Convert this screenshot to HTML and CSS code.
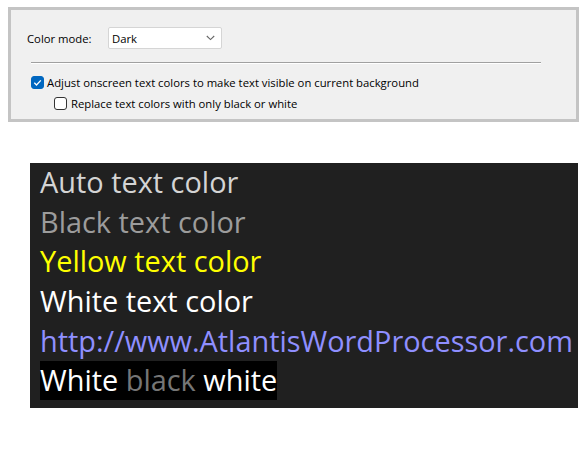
FILE: index.html
```html
<!DOCTYPE html>
<html>
<head>
<meta charset="utf-8">
<link rel="stylesheet" href="styles.css">
</head>
<body>
<div class="page">
  <div class="panel">
    <div class="mode-row">
      <span class="label">Color mode:</span>
      <div class="select">
        <span>Dark</span>
        <svg class="chev" width="9" height="6" viewBox="0 0 9 6"><path d="M0.8 1 L4.5 4.6 L8.2 1" fill="none" stroke="#666" stroke-width="1.1"/></svg>
      </div>
    </div>
    <div class="sep"></div>
    <div class="check-row">
      <span class="box checked"><svg width="13" height="13" viewBox="0 0 13 13"><path d="M3.3 6.8 L5.5 9 L9.8 4.4" fill="none" stroke="#fff" stroke-width="1.3"/></svg></span>
      <span>Adjust onscreen text colors to make text visible on current background</span>
    </div>
    <div class="check-row sub">
      <span class="box"></span>
      <span>Replace text colors with only black or white</span>
    </div>
  </div>
  <div class="doc">
    <div class="line auto">Auto text color</div>
    <div class="line black">Black text color</div>
    <div class="line yellow">Yellow text color</div>
    <div class="line white">White text color</div>
    <div class="line link">http://www.AtlantisWordProcessor.com</div>
    <div class="line"><span class="hl"><span class="white">White </span><span class="dim">black</span><span class="white"> white</span></span></div>
  </div>
</div>
</body>
</html>
```
FILE: styles.css
```css
html, body {
  margin: 0;
  padding: 0;
  background: #ffffff;
}
.page {
  width: 587px;
  height: 460px;
  padding: 7px 0 0 8px;
  box-sizing: border-box;
  font-family: "Open Sans", "Noto Sans", sans-serif;
}
.panel {
  width: 571px;
  height: 115px;
  box-sizing: border-box;
  border: 3px solid #c4c4c4;
  background: #f0f0f0;
  padding: 17px 0 0 16px;
  font-size: 11.3px;
  color: #000;
}
.mode-row {
  display: flex;
  align-items: center;
  height: 22px;
}
.label {
  width: 81px;
}
.select {
  width: 114px;
  height: 22px;
  box-sizing: border-box;
  border: 1px solid #d5d5d5;
  border-radius: 2px;
  background: #fff;
  display: flex;
  align-items: center;
  justify-content: space-between;
  padding: 0 6px 0 3px;
}
.sep {
  margin: 13px 0 0 4px;
  width: 510px;
  height: 1px;
  background: #a0a0a0;
  border-bottom: 1px solid #ffffff;
}
.check-row {
  display: flex;
  align-items: center;
  gap: 3px;
  margin: 11px 0 0 4px;
  height: 14px;
}
.check-row.sub {
  margin: 7px 0 0 27px;
  gap: 4px;
}
.box {
  width: 13px;
  height: 13px;
  box-sizing: border-box;
  border: 1px solid #333;
  border-radius: 3px;
  background: #fff;
  display: block;
}
.box svg { display: block; margin: -1px; }
.box.checked {
  background: #0067c0;
  border-color: #0067c0;
}
.doc {
  margin: 41px 0 0 22px;
  width: 548px;
  height: 245px;
  box-sizing: border-box;
  background: #202020;
  padding: 0 0 0 10px;
  font-size: 28.9px;
  line-height: 38px;
  white-space: nowrap;
}
.line { height: 39.7px; }
.auto { color: #d4d4d4; }
.black { color: #9c9c9c; }
.yellow { color: #ffff00; }
.white { color: #ffffff; }
.link { color: #8f8fff; }
.hl { background: #000000; display: inline-block; height: 39px; }
.dim { color: #767676; }
```
